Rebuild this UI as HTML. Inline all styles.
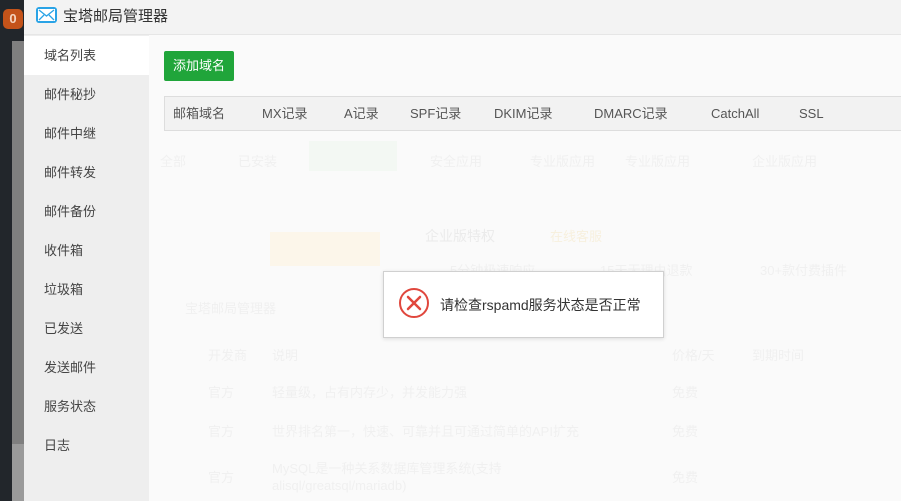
<!DOCTYPE html>
<html><head><meta charset="utf-8"><style>
*{margin:0;padding:0;box-sizing:border-box}
body{width:901px;height:501px;overflow:hidden;background:#fafafa;font-family:"Liberation Sans","Noto Sans CJK SC",sans-serif;font-size:12px;color:#333;position:relative}
.abs{position:absolute}
.ghost{position:absolute;color:#f0f0f0;font-size:13px;white-space:nowrap}
.th{position:absolute;top:0;line-height:16px}
</style></head><body>
<div class="abs" style="left:0;top:0;width:24px;height:501px;background:#22262b"></div>
<div class="abs" style="left:12px;top:41px;width:12px;height:403px;background:#7f7f7f"></div>
<div class="abs" style="left:12px;top:444px;width:12px;height:57px;background:#9a9a9a"></div>
<div class="abs" style="left:3px;top:9px;width:20px;height:20px;background:#c4531a;border-radius:5px;color:#f5d5c0;font-weight:bold;font-size:13px;text-align:center;line-height:20px">0</div>
<div class="abs" style="left:24px;top:0;width:877px;height:35px;background:#f3f3f3;border-bottom:1px solid #e6e6e6"></div>
<div class="abs" style="left:36px;top:7px;width:21px;height:16px;background:#29a3e6;border-radius:3px;overflow:hidden">
<svg width="21" height="16"><rect x="2.5" y="2.5" width="16" height="11" fill="#fff" stroke="#fff"/><path d="M3 3 L10.5 9 L18 3 M3 13 L8 8 M18 13 L13 8" stroke="#29a3e6" stroke-width="1.3" fill="none"/></svg></div>
<div class="abs" style="left:63px;top:5px;font-size:15px;color:#333">宝塔邮局管理器</div>
<div class="abs" style="left:24px;top:35px;width:125px;height:466px;background:#eeeeee"></div>
<div class="abs" style="left:24px;top:36px;width:125px;height:39px;background:#fff"></div>
<div class="abs" style="left:44px;top:48px;line-height:16px;font-size:13px;color:#444">
<div style="height:39px">域名列表</div><div style="height:39px">邮件秘抄</div><div style="height:39px">邮件中继</div><div style="height:39px">邮件转发</div><div style="height:39px">邮件备份</div><div style="height:39px">收件箱</div><div style="height:39px">垃圾箱</div><div style="height:39px">已发送</div><div style="height:39px">发送邮件</div><div style="height:39px">服务状态</div><div style="height:39px">日志</div></div>
<div class="ghost" style="left:160px;top:151px">全部</div>
<div class="ghost" style="left:238px;top:151px">已安装</div>
<div class="abs" style="left:309px;top:141px;width:88px;height:30px;background:#f3f8f3"></div>
<div class="ghost" style="left:430px;top:151px">安全应用</div>
<div class="ghost" style="left:530px;top:151px">专业版应用</div>
<div class="ghost" style="left:625px;top:151px">专业版应用</div>
<div class="ghost" style="left:752px;top:151px">企业版应用</div>
<div class="abs" style="left:270px;top:232px;width:110px;height:34px;background:#fcf6ea"></div>
<div class="ghost" style="left:425px;top:226px;font-size:14px;color:#ebebeb">企业版特权</div>
<div class="ghost" style="left:550px;top:226px;color:#f7f0de">在线客服</div>
<div class="ghost" style="left:450px;top:260px">5分钟极速响应</div>
<div class="ghost" style="left:600px;top:260px">15天无理由退款</div>
<div class="ghost" style="left:760px;top:260px">30+款付费插件</div>
<div class="ghost" style="left:185px;top:298px">宝塔邮局管理器</div>
<div class="ghost" style="left:208px;top:345px">开发商</div>
<div class="ghost" style="left:272px;top:345px">说明</div>
<div class="ghost" style="left:672px;top:345px">价格/天</div>
<div class="ghost" style="left:752px;top:345px">到期时间</div>
<div class="ghost" style="left:208px;top:382px">官方</div>
<div class="ghost" style="left:272px;top:382px">轻量级，占有内存少，并发能力强</div>
<div class="ghost" style="left:672px;top:382px">免费</div>
<div class="ghost" style="left:208px;top:421px">官方</div>
<div class="ghost" style="left:272px;top:421px">世界排名第一，快速、可靠并且可通过简单的API扩充</div>
<div class="ghost" style="left:672px;top:421px">免费</div>
<div class="ghost" style="left:208px;top:467px">官方</div>
<div class="ghost" style="left:272px;top:458px">MySQL是一种关系数据库管理系统(支持</div>
<div class="ghost" style="left:272px;top:478px">alisql/greatsql/mariadb)</div>
<div class="ghost" style="left:672px;top:467px">免费</div>
<div class="abs" style="left:164px;top:51px;width:70px;height:30px;background:#20a53a;border-radius:2px;color:#fff;font-size:13px;text-align:center;line-height:30px">添加域名</div>
<div class="abs" style="left:164px;top:96px;width:737px;height:35px;background:#f2f2f2;border:1px solid #ddd;border-right:none"></div>
<div class="abs" style="top:106px;left:0;width:901px;height:16px;font-size:13px;color:#555;white-space:nowrap">
<span class="th" style="left:173px">邮箱域名</span><span class="th" style="left:262px">MX记录</span><span class="th" style="left:344px">A记录</span><span class="th" style="left:410px">SPF记录</span><span class="th" style="left:494px">DKIM记录</span><span class="th" style="left:594px">DMARC记录</span><span class="th" style="left:711px">CatchAll</span><span class="th" style="left:799px">SSL</span></div>
<div class="abs" style="left:383px;top:271px;width:281px;height:67px;background:#fff;border:1px solid #d0d0d0;box-shadow:0 1px 4px rgba(0,0,0,.12)"></div>
<svg class="abs" style="left:398px;top:287px" width="32" height="32"><circle cx="16" cy="16" r="14" fill="none" stroke="#e0473d" stroke-width="2"/><path d="M10 10 L22 22 M22 10 L10 22" stroke="#e0473d" stroke-width="2.5" stroke-linecap="round"/></svg>
<div class="abs" style="left:440px;top:295px;font-size:14px;color:#333">请检查rspamd服务状态是否正常</div>
</body></html>
